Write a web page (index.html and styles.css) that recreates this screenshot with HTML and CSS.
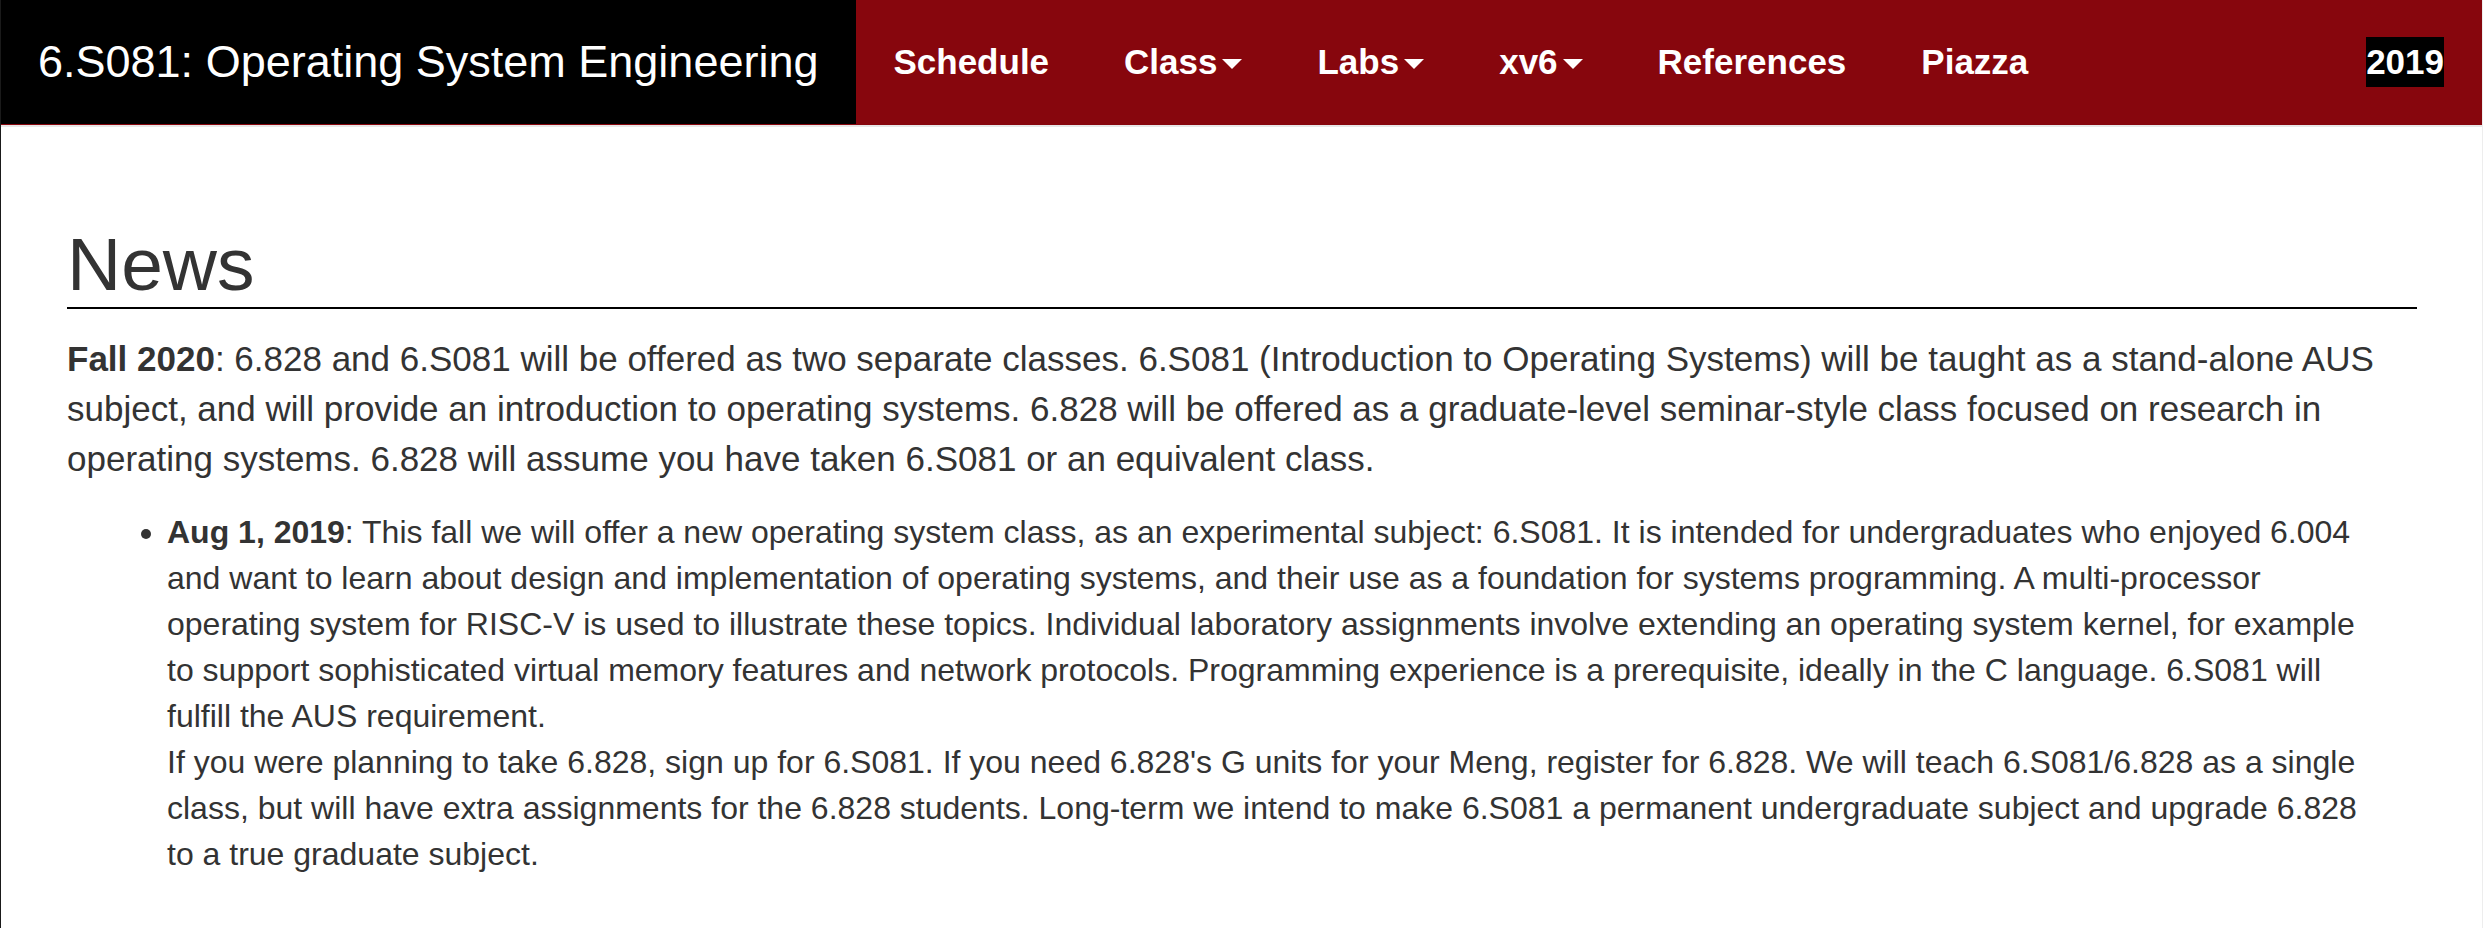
FILE: index.html
```html
<!DOCTYPE html>
<html lang="en">
<head>
<meta charset="utf-8">
<title>6.S081: Operating System Engineering</title>
<link rel="stylesheet" href="styles.css">
</head>
<body>
<header class="navbar">
  <a class="brand" href="#">6.S081: Operating System Engineering</a>
  <nav class="menu">
    <a class="item" href="#">Schedule</a>
    <button class="item" type="button">Class<span class="caret"></span></button>
    <button class="item" type="button">Labs<span class="caret"></span></button>
    <button class="item" type="button">xv6<span class="caret"></span></button>
    <a class="item" href="#">References</a>
    <a class="item" href="#">Piazza</a>
    <a class="item item-year" href="#"><span class="year">2019</span></a>
  </nav>
</header>
<main class="content">
  <h1 class="title">News</h1>
  <p class="intro"><b>Fall 2020</b>: 6.828 and 6.S081 will be offered as two separate classes. 6.S081 (Introduction to Operating Systems) will be taught as a stand-alone AUS subject, and will provide an introduction to operating systems. 6.828 will be offered as a graduate-level seminar-style class focused on research in operating systems. 6.828 will assume you have taken 6.S081 or an equivalent class.</p>
  <ul class="news">
    <li><b>Aug 1, 2019</b>: This fall we will offer a new operating system class, as an experimental subject: 6.S081. It is intended for undergraduates who enjoyed 6.004 and want to learn about design and implementation of operating systems, and their use as a foundation for systems programming. A multi-processor operating system for RISC-V is used to illustrate these topics. Individual laboratory assignments involve extending an operating system kernel, for example to support sophisticated virtual memory features and network protocols. Programming experience is a prerequisite, ideally in the C language. 6.S081 will fulfill the AUS requirement.<br>
    If you were planning to take 6.828, sign up for 6.S081. If you need 6.828's G units for your Meng, register for 6.828. We will teach 6.S081/6.828 as a single class, but will have extra assignments for the 6.828 students. Long-term we intend to make 6.S081 a permanent undergraduate subject and upgrade 6.828 to a true graduate subject.</li>
  </ul>
</main>
</body>
</html>
```
FILE: styles.css
```css
* {
  box-sizing: border-box;
}

body {
  margin: 0;
  min-height: 100vh;
  border-left: 1px solid #1a1a1a;
  border-right: 1px solid #ededed;
  background: #fff;
  color: #333;
  font-family: "Liberation Sans", Arial, sans-serif;
  font-size: 35px;
  line-height: 50px;
}

.navbar {
  display: flex;
  padding-bottom: 1px;
  background: #87060d;
  border-bottom: 2px solid #e7e7e7;
}

.brand {
  padding: 37px 38px 37px 37px;
  background: #000;
  color: #fff;
  font-size: 45px;
  text-decoration: none;
  white-space: nowrap;
}

.menu {
  display: flex;
  flex: 1;
  align-items: center;
}

.item {
  display: flex;
  align-items: center;
  margin: 0;
  padding: 0 38px 0 37px;
  border: 0;
  background: none;
  color: #fff;
  font: inherit;
  font-weight: bold;
  text-decoration: none;
  white-space: nowrap;
}

.item-year {
  margin-left: auto;
}

.year {
  background: #000;
}

.caret {
  margin-left: 5px;
  margin-top: 3px;
  border-top: 10px solid #fff;
  border-left: 10px solid transparent;
  border-right: 10px solid transparent;
}

.content {
  padding: 95px 65px 50px 66px;
}

.title {
  margin: 0 0 25px;
  border-bottom: 2px solid #000;
  font-size: 75px;
  font-weight: normal;
  line-height: 85px;
}

.intro {
  margin: 0 0 25px;
}

.news {
  margin: 0;
  padding: 0 30px 0 100px;
  font-size: 32px;
  line-height: 46px;
}
```
